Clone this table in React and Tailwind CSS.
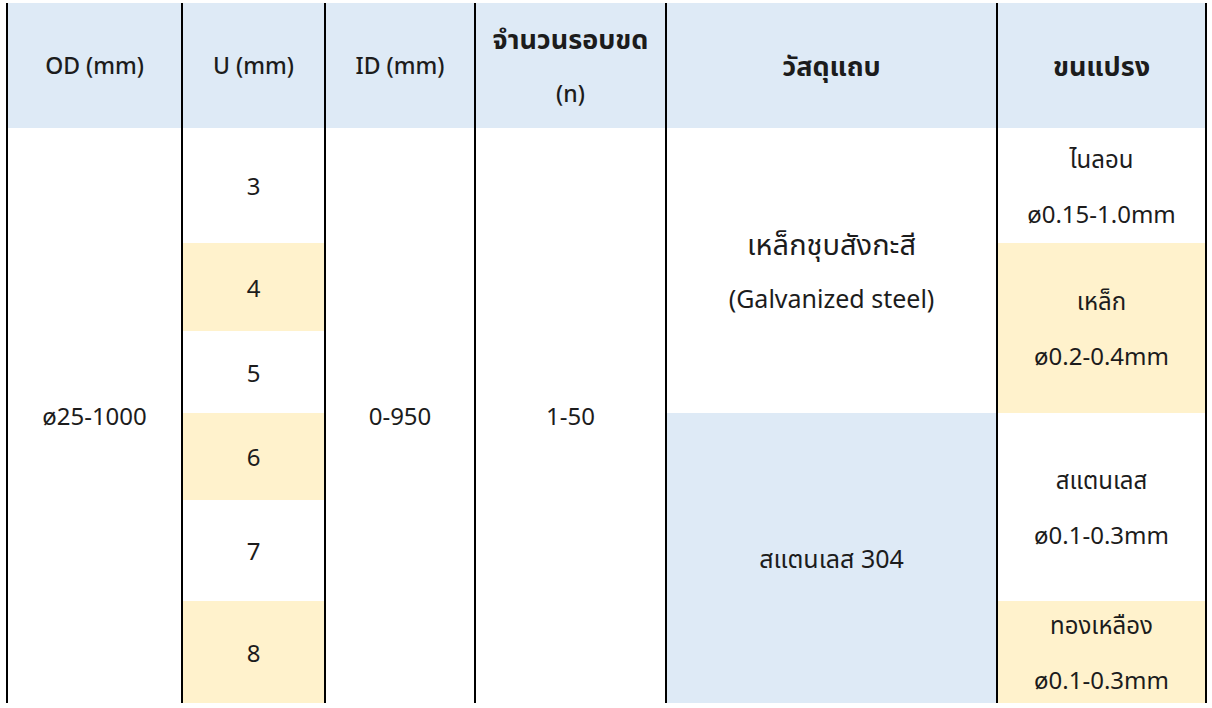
const YELLOW = 'bg-[#fff2cc]';
const BLUE = 'bg-[#deeaf6]';

function Cell({ children, className = '' }) {
  return (
    <div className={`flex flex-col items-center justify-center border-l-2 border-black text-center leading-[55px] ${className}`}>
      {children}
    </div>
  );
}

export default function App() {
  return (
    <div className="min-h-screen bg-white pl-[6px] pt-[3px] font-['Noto_Sans','Noto_Sans_Thai','Tahoma',sans-serif] text-[24px] text-[#1c1c1c]">
      <div className="grid w-[1201px] grid-cols-[175px_143px_150px_191px_331px_211px] grid-rows-[125px_115px_88px_82px_87px_101px_102px]">
        {/* header */}
        <Cell className={`${BLUE} text-[23px] font-medium`}>OD (mm)</Cell>
        <Cell className={`${BLUE} text-[23px] font-medium`}>U (mm)</Cell>
        <Cell className={`${BLUE} text-[23px] font-medium`}>ID (mm)</Cell>
        <Cell className={`${BLUE} font-bold`}>
          <span className="text-[27px]">จำนวนรอบขด</span>
          <span className="text-[23px] font-medium">(n)</span>
        </Cell>
        <Cell className={`${BLUE} text-[27px] font-bold`}>วัสดุแถบ</Cell>
        <Cell className={`${BLUE} border-r-2 text-[27px] font-bold`}>ขนแปรง</Cell>

        {/* OD */}
        <Cell className="col-start-1 row-span-6 row-start-2">ø25-1000</Cell>

        {/* U */}
        <Cell className="col-start-2 row-start-2">3</Cell>
        <Cell className={`col-start-2 row-start-3 ${YELLOW}`}>4</Cell>
        <Cell className="col-start-2 row-start-4">5</Cell>
        <Cell className={`col-start-2 row-start-5 ${YELLOW}`}>6</Cell>
        <Cell className="col-start-2 row-start-6">7</Cell>
        <Cell className={`col-start-2 row-start-7 ${YELLOW}`}>8</Cell>

        {/* ID */}
        <Cell className="col-start-3 row-span-6 row-start-2">0-950</Cell>

        {/* n */}
        <Cell className="col-start-4 row-span-6 row-start-2">1-50</Cell>

        {/* material */}
        <Cell className="col-start-5 row-span-3 row-start-2">
          <span className="text-[29px]">เหล็กชุบสังกะสี</span>
          <span className="text-[25px]">(Galvanized steel)</span>
        </Cell>
        <Cell className={`col-start-5 row-span-3 row-start-5 ${BLUE} text-[25px]`}>สแตนเลส 304</Cell>

        {/* bristle */}
        <Cell className="col-start-6 row-start-2 border-r-2">
          <span>ไนลอน</span>
          <span>ø0.15-1.0mm</span>
        </Cell>
        <Cell className={`col-start-6 row-span-2 row-start-3 border-r-2 ${YELLOW}`}>
          <span>เหล็ก</span>
          <span>ø0.2-0.4mm</span>
        </Cell>
        <Cell className="col-start-6 row-span-2 row-start-5 border-r-2">
          <span>สแตนเลส</span>
          <span>ø0.1-0.3mm</span>
        </Cell>
        <Cell className={`col-start-6 row-start-7 border-r-2 ${YELLOW}`}>
          <span>ทองเหลือง</span>
          <span>ø0.1-0.3mm</span>
        </Cell>
      </div>
    </div>
  );
}
